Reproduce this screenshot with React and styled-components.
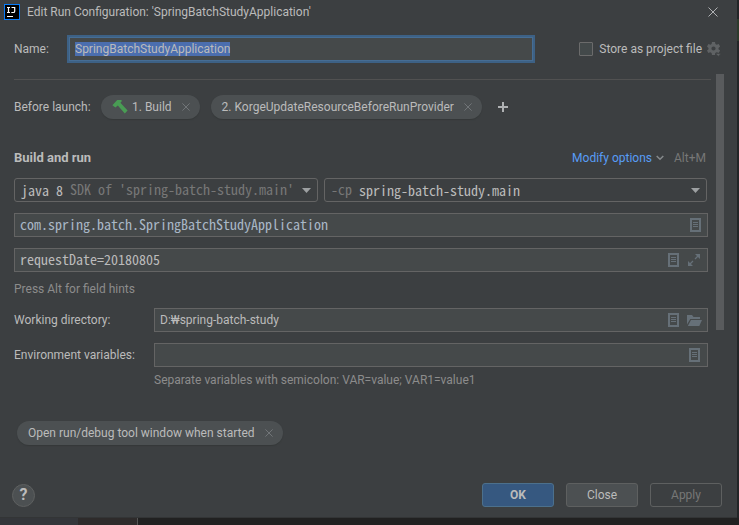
import React, { useEffect, useRef } from "react";
import styled, { createGlobalStyle, css } from "styled-components";

const UI = `Roboto, "Noto Sans CJK KR", sans-serif`;
const MONO = `"Noto Sans Mono CJK KR", "DejaVu Sans Mono", monospace`;

const GlobalStyle = createGlobalStyle`
  *, *::before, *::after { box-sizing: border-box; }
  body { margin: 0; background: #232323; color: #bbbbbb; font: 12px/20px ${UI}; }
  button, input, select { font: inherit; color: inherit; margin: 0; }
  svg { display: block; flex: none; }
`;

const Desktop = styled.div`
  min-height: 100vh;
  display: grid;
  grid-template: 1fr 7px / 1fr 2px;
`;

const Dialog = styled.main`
  background: #3c3f41;
  border-bottom: 1px solid #333536;
  display: flex;
  flex-direction: column;
  min-width: 0;
`;

const EditorEdge = styled.div`
  background: linear-gradient(#232527 19px, #2c3a2c 19px, #2c3a2c 41px, #232527 41px);
`;

const StatusStrip = styled.div`
  grid-column: 1 / -1;
  display: grid;
  grid-template-columns: 78px 60px 1fr;
  background: #212121;
`;

const StripPart = styled.div`
  background: ${(p) => (p.$first ? "#34363a" : "#2e2b2b")};
  border-right: ${(p) => (p.$first ? "0" : "1px solid #555555")};
`;

const TitleBar = styled.header`
  display: flex;
  align-items: center;
  gap: 7px;
  height: 23px;
  padding: 0 19px 0 4px;
`;

const Title = styled.h1`
  flex: 1;
  margin: 0;
  font-size: 12px;
  font-weight: 400;
  line-height: 20px;
  white-space: nowrap;
`;

const IconButton = styled.button`
  display: flex;
  flex: none;
  padding: 0;
  border: 0;
  background: none;
  color: ${(p) => p.$color || "#afb1b3"};
`;

const NameRow = styled.div`
  display: flex;
  align-items: center;
  padding: 12px 16px 0 14px;
`;

const NameLabel = styled.label`
  width: 53px;
`;

const NameInput = styled.input`
  flex: 1;
  min-width: 0;
  height: 28px;
  padding: 0 6px;
  border: 2px solid #3d6185;
  box-shadow: inset 0 0 0 1px #466d94;
  outline: none;
  background: #45494a;
  &::selection { background: #4b6eaf; color: #bbbbbb; }
`;

const StoreOption = styled.label`
  display: flex;
  align-items: center;
  gap: 6px;
  margin: 0 5px 0 44px;
  white-space: nowrap;
`;

const Checkbox = styled.input`
  appearance: none;
  width: 14px;
  height: 14px;
  border: 1px solid #6b6b6b;
  border-radius: 1px;
  background: #43494a;
`;

const Divider = styled.hr`
  height: 1px;
  margin: 5px -3px 0 0;
  border: 0;
  background: #515151;
`;

const ScrollArea = styled.div`
  flex: 1;
  display: grid;
  grid-template-columns: 1fr 8px;
  padding: 11px 13px 0 14px;
`;

const Content = styled.div`
  min-width: 0;
  padding-right: 8px;
`;

const ScrollThumb = styled.div`
  height: 256px;
  background: #595b5d;
`;

const LaunchRow = styled.div`
  display: flex;
  align-items: center;
  gap: 11px;
  margin-top: 15px;
  white-space: nowrap;
`;

const LaunchLabel = styled.span`
  width: 76px;
`;

const Chip = styled.span`
  display: inline-flex;
  align-items: center;
  gap: 10px;
  height: 24px;
  padding: 0 10px 0 11px;
  border-radius: 12px;
  background: #4c5052;
  box-shadow: 0 1px 1px #353839;
  white-space: nowrap;
`;

const ChipLabel = styled.span`
  display: flex;
  align-items: center;
  gap: 4px;
`;

const AddButton = styled(IconButton)`
  margin-left: 5px;
`;

const SectionHead = styled.div`
  display: flex;
  align-items: center;
  margin: 29px 2px 0 0;
`;

const SectionTitle = styled.h2`
  flex: 1;
  margin: 0;
  font-size: 13px;
  font-weight: 700;
  line-height: 20px;
`;

const LinkButton = styled.a`
  display: flex;
  align-items: center;
  gap: 4px;
  color: #589df6;
  text-decoration: none;
`;

const Shortcut = styled.span`
  margin-left: 10px;
  color: #777777;
`;

const SelectRow = styled.div`
  display: grid;
  grid-template-columns: 304fr 383fr;
  gap: 6px;
  margin: 10px 1px 0 0;
`;

const Combo = styled.div`
  display: grid;
  align-items: center;
  height: 24px;
  border: 1px solid #646464;
  border-radius: 3px;
  font: 14px/20px ${MONO};
  white-space: pre;
  > * { grid-area: 1 / 1; }
  > svg { justify-self: end; margin-right: 6px; pointer-events: none; }
`;

const ComboSelect = styled.select`
  appearance: none;
  width: 100%;
  height: 22px;
  padding: 0 0 3px ${(p) => (p.$after ? "calc(6px + 4ch)" : "6px")};
  border: 0;
  outline: none;
  background: transparent;
`;

const ComboNote = styled.span`
  padding: 0 0 3px ${(p) => (p.$indent ? "calc(6px + 7ch)" : "6px")};
  color: #777777;
  pointer-events: none;
`;

const Field = styled.div`
  display: flex;
  align-items: center;
  flex: 1;
  min-width: 0;
  height: 24px;
  gap: ${(p) => (p.$mono ? "9px" : "8px")};
  padding-right: ${(p) => (p.$tight ? "5px" : p.$wide ? "7px" : "6px")};
  border: 1px solid #646464;
  background: #45494a;
  ${(p) => p.$mono && css`font: 14px/20px ${MONO};`}
  > input { padding-bottom: ${(p) => (p.$mono ? "3px" : "0")}; }
`;

const FieldInput = styled.input`
  flex: 1;
  min-width: 0;
  height: 22px;
  padding: 0 0 0 5px;
  border: 0;
  outline: none;
  background: transparent;
  color: ${(p) => (p.$code ? "#a9b7c6" : "#bbbbbb")};
`;

const FieldRow = styled.div`
  display: flex;
  align-items: center;
  margin-top: 11px;
`;

const FieldLabel = styled.label`
  width: 140px;
  white-space: nowrap;
`;

const Hint = styled.p`
  margin: ${(p) => (p.$indent ? "3px 0 0 140px" : "7px 0 -2px")};
  color: #8c8c8c;
`;

const OptionChips = styled.div`
  display: flex;
  margin: 31px 0 0 3px;
`;

const Footer = styled.footer`
  display: flex;
  align-items: center;
  gap: 12px;
  padding: 0 15px 10px 12px;
`;

const HelpButton = styled.button`
  width: 23px;
  height: 23px;
  margin-right: auto;
  padding: 0;
  border: 1px solid #5e6060;
  border-radius: 50%;
  background: #4c5052;
  font: 700 16px/20px Roboto, sans-serif;
`;

const variants = {
  primary: css`background: #365880; border-color: #4c708c; font-weight: 700;`,
  normal: css`background: #4c5052; border-color: #5e6060;`,
  disabled: css`background: transparent; border-color: #5e6060; color: #777777;`,
};

const ActionButton = styled.button`
  width: 72px;
  height: 24px;
  padding: 0;
  border: 1px solid;
  border-radius: 3px;
  line-height: 20px;
  ${(p) => variants[p.$variant]}
`;

const Logo = () => (
  <svg width="16" height="16" viewBox="0 0 16 16" aria-hidden="true">
    <rect width="16" height="16" fill="#087cfa" />
    <rect x="1" y="1" width="14" height="14" fill="#000" />
    <path d="M3 3.5h3M4.5 3.5v5M3 8.5h3M7.5 3.5h3.2v3.7q0 1.3-1.4 1.3H7.3" fill="none" stroke="#fff" strokeWidth="1.2" />
    <path d="M3 12.5h6" stroke="#fff" />
  </svg>
);

const Cross = ({ size = 8 }) => (
  <svg width={size} height={size} viewBox="0 0 10 10" fill="none" stroke="currentColor" strokeWidth={size > 8 ? 1 : 1.2}>
    <path d="M.5.5l9 9M9.5.5l-9 9" />
  </svg>
);

const Hammer = () => (
  <svg width="16" height="16" viewBox="0 0 16 16" fill="#499c54" aria-hidden="true">
    <path d="M.4 6.2 5.2 1h4.4v1.4L8.4 3.8 15.6 11.6 12.8 14.4 5.8 6.4 3.4 8.6z" />
  </svg>
);

const Gear = () => (
  <svg width="14" height="15" viewBox="0 0 14 15" fill="#5f6264">
    <path fillRule="evenodd" d="M5 0h3l.4 2 1.3.8 2-.7 1.4 2.4-1.6 1.4v1.3l1.6 1.4-1.4 2.4-2-.7-1.3.8-.4 2H5l-.4-2-1.3-.8-2 .7L0 8.6l1.5-1.4V5.9L0 4.5l1.4-2.4 2 .7L4.6 2zM6.5 4.4a2.1 2.1 0 1 0 0 4.2 2.1 2.1 0 0 0 0-4.2z" />
    <path d="M8.6 11.4h5.4l-2.7 3z" stroke="#3c3f41" strokeWidth=".6" />
  </svg>
);

const Plus = () => (
  <svg width="10" height="10" viewBox="0 0 10 10" stroke="currentColor" strokeWidth="2">
    <path d="M5 0v10M0 5h10" />
  </svg>
);

const Chevron = () => (
  <svg width="8" height="6" viewBox="0 0 8 6" fill="none" stroke="#868a8c" strokeWidth="1.5" aria-hidden="true">
    <path d="M.7 1 4 4.3 7.3 1" />
  </svg>
);

const Arrow = () => (
  <svg width="9" height="5" viewBox="0 0 9 5" fill="#9da0a2" aria-hidden="true">
    <path d="M0 0h9L4.5 5z" />
  </svg>
);

const Doc = () => (
  <svg width="11" height="14" viewBox="0 0 11 14" fill="none" stroke="#667078">
    <path d="M1 1h9v12H1z" strokeWidth="2" />
    <path d="M3 4.5h5M3 6.5h5M3 8.5h5" />
  </svg>
);

const Expand = () => (
  <svg width="12" height="12" viewBox="0 0 12 12" fill="#667078" stroke="#667078">
    <path d="M7 0h5v5zM0 7v5h5z" stroke="none" />
    <path d="M7 5l3-3M2 10l3-3" strokeWidth="1.3" />
  </svg>
);

const Folder = () => (
  <svg width="15" height="11" viewBox="0 0 15 11" fill="#667078">
    <path d="M0 0h5l1.5 2H13v2H3.3L0 9.5z" />
    <path d="M4 5h11l-2.7 6H.8z" />
  </svg>
);

const ChipItem = ({ icon, children }) => (
  <Chip>
    <ChipLabel>{icon}{children}</ChipLabel>
    <IconButton $color="#73777a" aria-label="Remove"><Cross /></IconButton>
  </Chip>
);

export default function App() {
  const nameRef = useRef(null);
  useEffect(() => {
    nameRef.current.focus();
    nameRef.current.select();
  }, []);

  return (
    <>
      <GlobalStyle />
      <Desktop>
        <Dialog>
          <TitleBar>
            <Logo />
            <Title>Edit Run Configuration: 'SpringBatchStudyApplication'</Title>
            <IconButton aria-label="Close dialog"><Cross size={10} /></IconButton>
          </TitleBar>
          <NameRow>
            <NameLabel htmlFor="name">Name:</NameLabel>
            <NameInput id="name" ref={nameRef} defaultValue="SpringBatchStudyApplication" spellCheck={false} />
            <StoreOption><Checkbox type="checkbox" />Store as project file</StoreOption>
            <IconButton aria-label="Storage settings"><Gear /></IconButton>
          </NameRow>
          <ScrollArea>
            <Content>
              <Divider />
              <LaunchRow>
                <LaunchLabel>Before launch:</LaunchLabel>
                <ChipItem icon={<Hammer />}>1. Build</ChipItem>
                <ChipItem>2. KorgeUpdateResourceBeforeRunProvider</ChipItem>
                <AddButton aria-label="Add task"><Plus /></AddButton>
              </LaunchRow>
              <SectionHead>
                <SectionTitle>Build and run</SectionTitle>
                <LinkButton href="#options">Modify options<Chevron /></LinkButton>
                <Shortcut>Alt+M</Shortcut>
              </SectionHead>
              <SelectRow>
                <Combo>
                  <ComboSelect aria-label="Java SDK"><option>java 8</option></ComboSelect>
                  <ComboNote $indent>SDK of 'spring-batch-study.main'</ComboNote>
                  <Arrow />
                </Combo>
                <Combo>
                  <ComboSelect $after aria-label="Classpath module"><option>spring-batch-study.main</option></ComboSelect>
                  <ComboNote>-cp</ComboNote>
                  <Arrow />
                </Combo>
              </SelectRow>
              <FieldRow>
                <Field $mono>
                  <FieldInput $code aria-label="Main class" defaultValue="com.spring.batch.SpringBatchStudyApplication" spellCheck={false} />
                  <IconButton aria-label="Browse classes"><Doc /></IconButton>
                </Field>
              </FieldRow>
              <FieldRow>
                <Field $mono $wide>
                  <FieldInput aria-label="Program arguments" defaultValue="requestDate=20180805" spellCheck={false} />
                  <IconButton aria-label="Insert macro"><Doc /></IconButton>
                  <IconButton aria-label="Expand"><Expand /></IconButton>
                </Field>
              </FieldRow>
              <Hint>Press Alt for field hints</Hint>
              <FieldRow>
                <FieldLabel htmlFor="dir">Working directory:</FieldLabel>
                <Field $tight>
                  <FieldInput id="dir" defaultValue="D:₩spring-batch-study" spellCheck={false} />
                  <IconButton aria-label="Insert macro"><Doc /></IconButton>
                  <IconButton aria-label="Browse folders"><Folder /></IconButton>
                </Field>
              </FieldRow>
              <FieldRow>
                <FieldLabel htmlFor="env">Environment variables:</FieldLabel>
                <Field $wide>
                  <FieldInput id="env" />
                  <IconButton aria-label="Edit variables"><Doc /></IconButton>
                </Field>
              </FieldRow>
              <Hint $indent>Separate variables with semicolon: VAR=value; VAR1=value1</Hint>
              <OptionChips>
                <ChipItem>Open run/debug tool window when started</ChipItem>
              </OptionChips>
            </Content>
            <ScrollThumb />
          </ScrollArea>
          <Footer>
            <HelpButton aria-label="Help">?</HelpButton>
            <ActionButton $variant="primary">OK</ActionButton>
            <ActionButton $variant="normal">Close</ActionButton>
            <ActionButton $variant="disabled" disabled>Apply</ActionButton>
          </Footer>
        </Dialog>
        <EditorEdge />
        <StatusStrip><StripPart $first /><StripPart /></StatusStrip>
      </Desktop>
    </>
  );
}
